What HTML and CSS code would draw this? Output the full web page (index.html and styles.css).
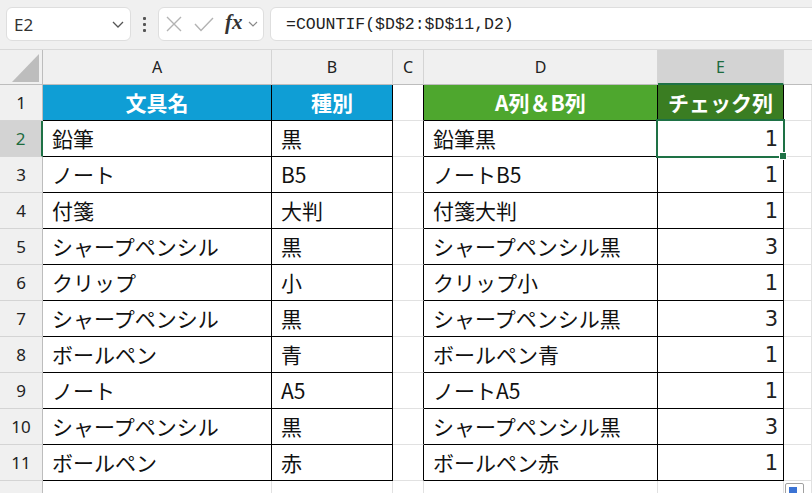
FILE: index.html
```html
<!DOCTYPE html>
<html lang="ja">
<head>
<meta charset="utf-8">
<link rel="stylesheet" href="styles.css">
</head>
<body>
<div class="app">
  <div class="toolbar">
    <div class="namebox">
      <span class="name">E2</span>
      <svg class="chev" width="12" height="7" viewBox="0 0 12 7"><path d="M1 1 L6 6 L11 1" fill="none" stroke="#555" stroke-width="1.3"/></svg>
    </div>
    <div class="kebab"><i></i><i></i><i></i></div>
    <div class="fxbox">
      <svg width="16" height="16" viewBox="0 0 16 16"><path d="M1 1 L15 15 M15 1 L1 15" stroke="#b3b3b3" stroke-width="1.4" fill="none"/></svg>
      <svg width="20" height="15" viewBox="0 0 20 15"><path d="M1 7 L7 13.5 L19 1" stroke="#b3b3b3" stroke-width="1.4" fill="none"/></svg>
      <span class="fx">fx</span>
      <svg class="chev2" width="10" height="6" viewBox="0 0 10 6"><path d="M1 1 L5 5 L9 1" fill="none" stroke="#888" stroke-width="1.2"/></svg>
    </div>
    <div class="formula">=COUNTIF($D$2:$D$11,D2)</div>
  </div>

  <div class="sheet">
    <div class="ch corner"><svg width="42" height="34" viewBox="0 0 42 34"><polygon points="12,32 39,32 39,4" fill="#bdbdbd"/></svg></div>
    <div class="ch">A</div>
    <div class="ch">B</div>
    <div class="ch">C</div>
    <div class="ch">D</div>
    <div class="ch sel">E</div>
    <div class="ch last"></div>

    <div class="rh">1</div>
    <div class="c t hb">文具名</div>
    <div class="c t hb">種別</div>
    <div class="c cc t"></div>
    <div class="c t hg">A列＆B列</div>
    <div class="c t hdg">チェック列</div>
    <div class="c"></div>

    <div class="rh sel">2</div>
    <div class="c t">鉛筆</div>
    <div class="c t">黒</div>
    <div class="c cc t"></div>
    <div class="c t">鉛筆黒</div>
    <div class="c t num active">1</div>
    <div class="c"></div>

    <div class="rh">3</div>
    <div class="c t">ノート</div>
    <div class="c t">B5</div>
    <div class="c cc t"></div>
    <div class="c t">ノートB5</div>
    <div class="c t num">1</div>
    <div class="c"></div>

    <div class="rh">4</div>
    <div class="c t">付箋</div>
    <div class="c t">大判</div>
    <div class="c cc t"></div>
    <div class="c t">付箋大判</div>
    <div class="c t num">1</div>
    <div class="c"></div>

    <div class="rh">5</div>
    <div class="c t">シャープペンシル</div>
    <div class="c t">黒</div>
    <div class="c cc t"></div>
    <div class="c t">シャープペンシル黒</div>
    <div class="c t num">3</div>
    <div class="c"></div>

    <div class="rh">6</div>
    <div class="c t">クリップ</div>
    <div class="c t">小</div>
    <div class="c cc t"></div>
    <div class="c t">クリップ小</div>
    <div class="c t num">1</div>
    <div class="c"></div>

    <div class="rh">7</div>
    <div class="c t">シャープペンシル</div>
    <div class="c t">黒</div>
    <div class="c cc t"></div>
    <div class="c t">シャープペンシル黒</div>
    <div class="c t num">3</div>
    <div class="c"></div>

    <div class="rh">8</div>
    <div class="c t">ボールペン</div>
    <div class="c t">青</div>
    <div class="c cc t"></div>
    <div class="c t">ボールペン青</div>
    <div class="c t num">1</div>
    <div class="c"></div>

    <div class="rh">9</div>
    <div class="c t">ノート</div>
    <div class="c t">A5</div>
    <div class="c cc t"></div>
    <div class="c t">ノートA5</div>
    <div class="c t num">1</div>
    <div class="c"></div>

    <div class="rh">10</div>
    <div class="c t">シャープペンシル</div>
    <div class="c t">黒</div>
    <div class="c cc t"></div>
    <div class="c t">シャープペンシル黒</div>
    <div class="c t num">3</div>
    <div class="c"></div>

    <div class="rh">11</div>
    <div class="c t">ボールペン</div>
    <div class="c t">赤</div>
    <div class="c cc t"></div>
    <div class="c t">ボールペン赤</div>
    <div class="c t num">1</div>
    <div class="c"></div>

    <div class="rh"></div>
    <div class="c"></div>
    <div class="c"></div>
    <div class="c"></div>
    <div class="c"></div>
    <div class="c"></div>
    <div class="c"></div>
  </div>
  <div class="qa"><span></span></div>
</div>
</body>
</html>
```

FILE: styles.css
```css
* { box-sizing: border-box; }
html, body { margin: 0; padding: 0; }
body {
  width: 812px;
  height: 493px;
  overflow: hidden;
  background: #ffffff;
  font-family: "Noto Sans CJK JP", "Noto Sans", sans-serif;
}
.app { position: relative; width: 812px; height: 493px; overflow: hidden; }

.toolbar {
  height: 50px;
  background: #f0f0f0;
  display: flex;
  align-items: flex-start;
  padding: 7px 0 0 6px;
  border-bottom: 1px solid #d9d9d9;
  overflow: hidden;
}
.toolbar > * { flex-shrink: 0; }
.namebox {
  width: 125px;
  height: 34px;
  background: #fff;
  border: 1px solid #dedede;
  border-radius: 6px;
  display: flex;
  align-items: center;
  justify-content: space-between;
  padding: 0 6px 0 7px;
}
.name { font-family: "Noto Sans", sans-serif; font-size: 17px; color: #333; }
.kebab {
  width: 27px;
  height: 34px;
  display: flex;
  flex-direction: column;
  align-items: center;
  justify-content: center;
  gap: 3px;
}
.kebab i { display: block; width: 3px; height: 3px; background: #555; border-radius: 1px; }
.fxbox {
  width: 106px;
  height: 34px;
  background: #fff;
  border: 1px solid #dedede;
  border-radius: 6px;
  display: flex;
  align-items: center;
  padding: 0 4px 0 7px;
  gap: 12px;
}
.fx {
  font-family: "Liberation Serif", serif;
  font-style: italic;
  font-weight: bold;
  font-size: 21px;
  color: #333;
  margin-left: -1px;
  margin-top: -3px;
}
.chev2 { margin-left: -7px; }
.formula {
  margin-left: 6px;
  width: 560px;
  height: 34px;
  background: #fff;
  border: 1px solid #dedede;
  border-radius: 6px;
  padding: 0 0 0 15px;
  display: flex;
  align-items: center;
  font-family: "Liberation Mono", monospace;
  font-size: 16.5px;
  color: #222;
}

.sheet {
  display: grid;
  grid-template-columns: 43px 229px 121px 31px 234px 126px 1fr;
  grid-template-rows: 35px repeat(11, 36px) 36px;
}
.ch {
  background: #f0f0f0;
  border-right: 1px solid #d4d4d4;
  border-bottom: 1px solid #bdbdbd;
  display: flex;
  align-items: center;
  justify-content: center;
  font-family: "Noto Sans", sans-serif;
  font-size: 16px;
  color: #222;
}
.ch.corner { border-right: 1px solid #bdbdbd; align-items: flex-start; justify-content: flex-start; }
.ch.corner svg { display: block; }
.ch.sel { background: #d3d3d3; color: #1d6b3e; border-bottom: 2px solid #1e7145; }
.ch.last { border-right: none; }

.rh {
  background: #f0f0f0;
  border-right: 1px solid #bdbdbd;
  border-bottom: 1px solid #d4d4d4;
  display: flex;
  align-items: center;
  justify-content: center;
  font-family: "Noto Sans", sans-serif;
  font-size: 17px;
  color: #222;
}
.rh.sel { background: #d3d3d3; color: #1d6b3e; border-right: 2px solid #1e7145; }

.c {
  border-right: 1px solid #e1e1e1;
  border-bottom: 1px solid #e1e1e1;
  display: flex;
  align-items: center;
  padding: 0 5px 2px 9px;
  font-size: 21px;
  color: #111;
  white-space: nowrap;
}
.c.t { border-right-color: #000; border-bottom-color: #000; }
.c.cc { border-bottom-color: #e1e1e1; }
.c.num { justify-content: flex-end; font-family: "DejaVu Sans", sans-serif; font-size: 21px; color: #222; padding-bottom: 0; }
.hb, .hg, .hdg { color: #fff; font-weight: bold; justify-content: center; padding: 0 0 1px 0; }
.hb { background: #0f9ed5; }
.hg { background: #4ea72e; }
.hdg { background: #3a7d22; }

.active { position: relative; }
.active::after {
  content: "";
  position: absolute;
  left: -2px;
  top: -2px;
  right: -2px;
  bottom: -2px;
  border: 2px solid #1e7145;
}
.active::before {
  content: "";
  position: absolute;
  right: -4px;
  bottom: -4px;
  width: 6px;
  height: 6px;
  background: #1e7145;
  border: 1px solid #fff;
  z-index: 2;
}

.qa {
  position: absolute;
  left: 785px;
  top: 483px;
  width: 19px;
  height: 14px;
  background: #fff;
  border: 1px solid #a0a0a0;
  border-radius: 2px;
  padding: 3px;
}
.qa span { display: block; width: 8px; height: 6px; background: #3b73d4; }
```
